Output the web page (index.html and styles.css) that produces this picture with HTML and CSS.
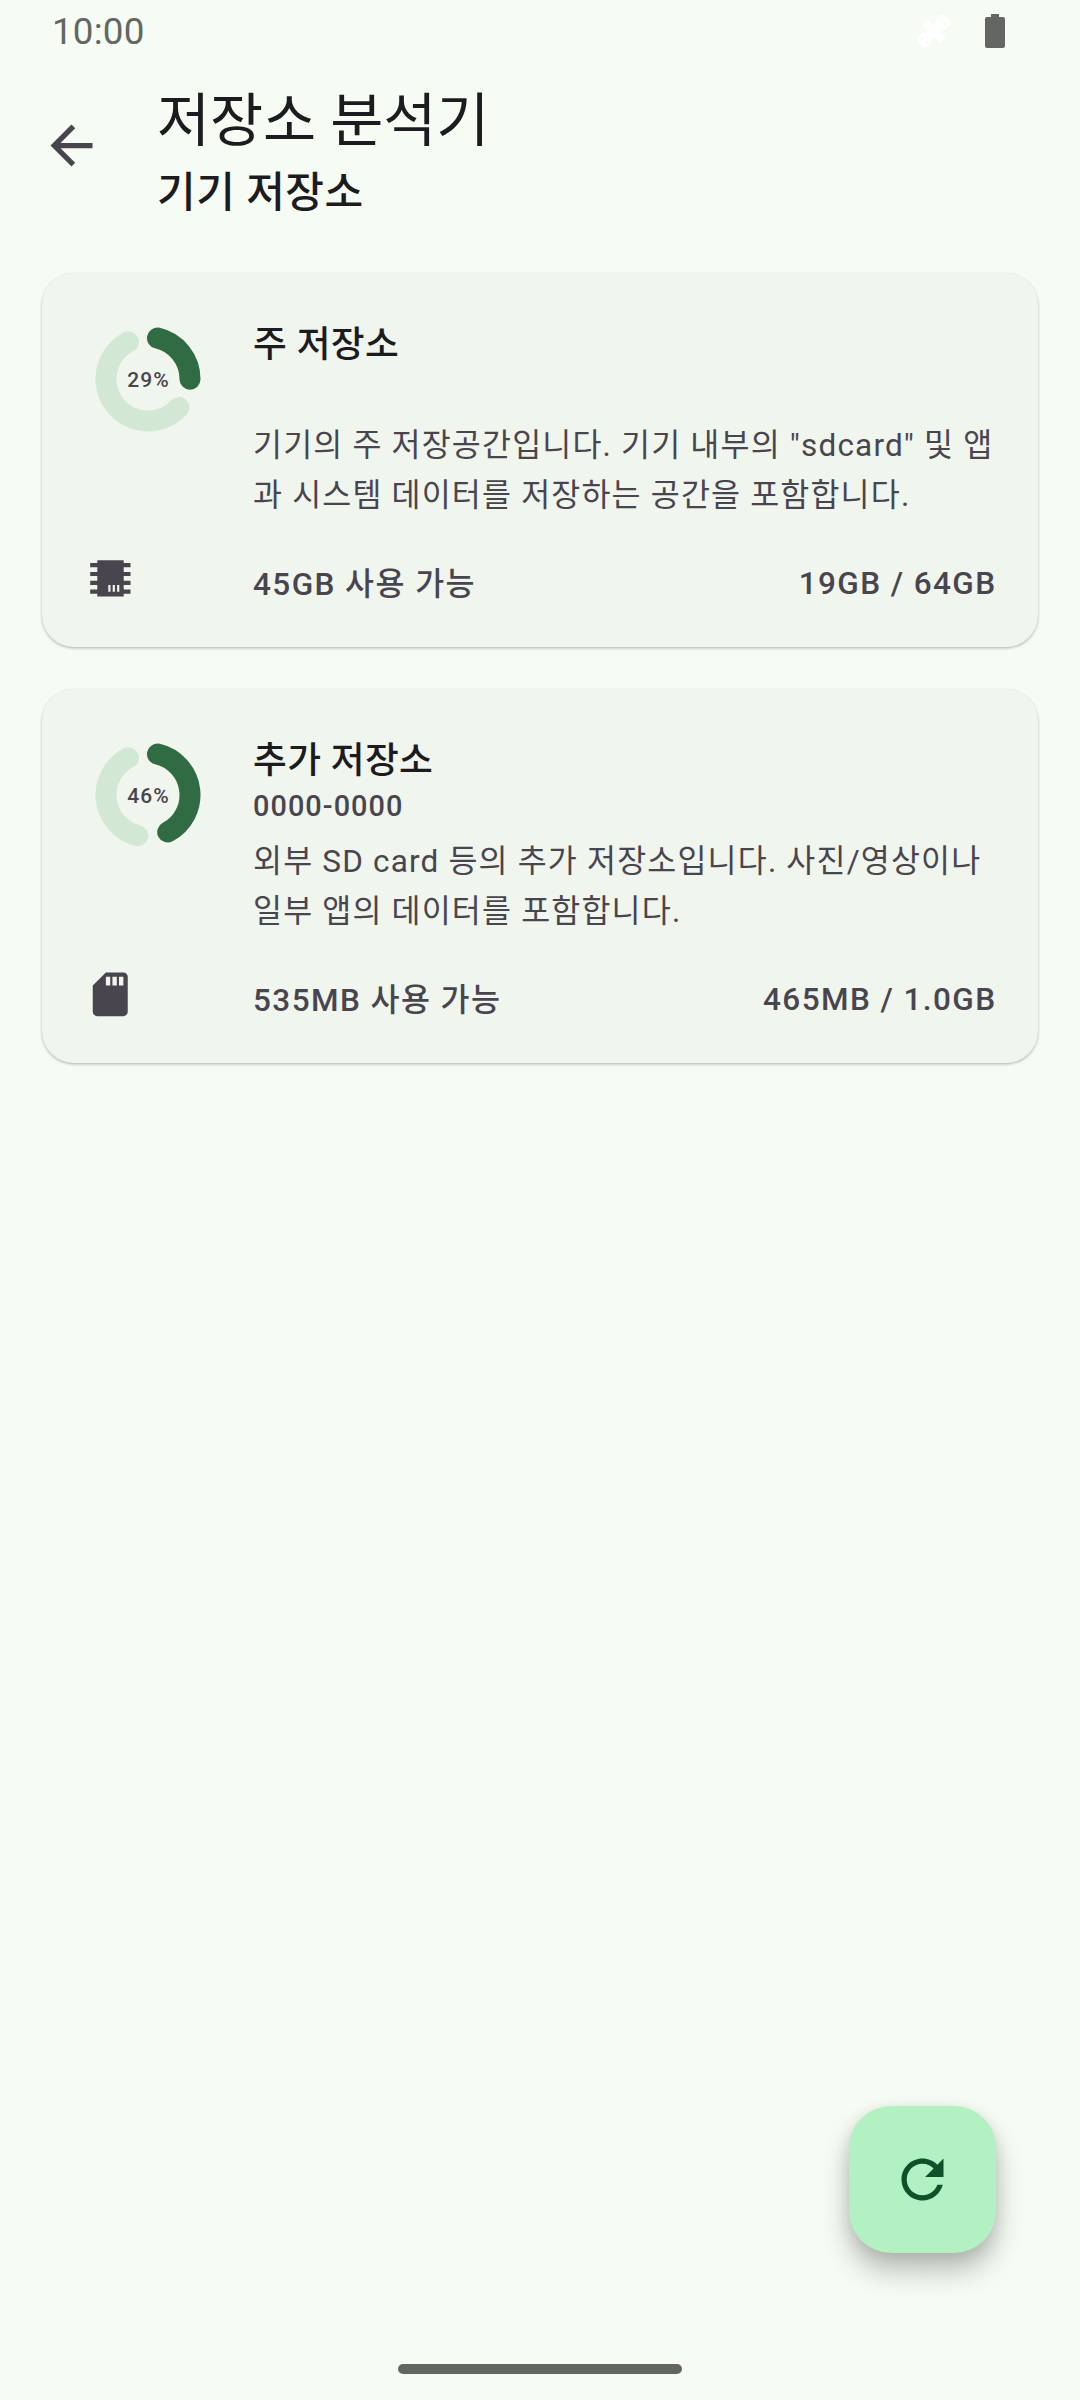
FILE: index.html
```html
<!DOCTYPE html>
<html lang="ko">
<head>
<meta charset="utf-8">
<title>저장소 분석기</title>
<link rel="stylesheet" href="styles.css">
</head>
<body>
<div class="screen">
  <div class="status">
    <span class="clock">10:00</span>
    <svg class="bug" width="38" height="38" viewBox="0 0 38 38"><path transform="translate(19 19) rotate(-45)" fill="#fff" fill-rule="evenodd" d="M-4-13h8v8h3.500Q9-7.500 13-7.500q6 0 6 6v3q0 6-6 6Q9 7.500 7.500 5H4v8h-8V5h-3.500Q-9 7.500-13 7.500q-6 0-6-6v-3q0-6 6-6Q-9-7.500-7.500-5H-4zM-14.500-4v2.500h2.500V-4zM-14.500 1.500V4h2.500V1.500zM12-4v2.500h2.500V-4zM12 1.500V4h2.500V1.500z"/></svg>
    <svg class="battery" width="20" height="34" viewBox="0 0 20 34"><path fill="#636662" d="M6 0h8v3h4a2 2 0 0 1 2 2v27a2 2 0 0 1-2 2H2a2 2 0 0 1-2-2V5a2 2 0 0 1 2-2h4z"/></svg>
  </div>
  <header class="appbar">
    <svg class="back" width="63" height="63" viewBox="0 0 24 24"><path fill="#49454f" d="M20 11H7.83l5.59-5.59L12 4l-8 8 8 8 1.41-1.41L7.83 13H20z"/></svg>
    <div>
      <h1 class="title">저장소 분석기</h1>
      <p class="subtitle">기기 저장소</p>
    </div>
  </header>
  <main class="cards">
    <article class="card">
      <div class="donut">
        <svg width="106" height="106" viewBox="-53 -53 106 106"><path class="track" d="M30.97 28.37A42 42 0 1 1-19.46-37.22"/><path class="used" d="M9.45-40.92A42 42 0 0 1 42 0.2"/></svg>
        <span class="percent">29%</span>
      </div>
      <div class="info">
        <h2 class="name">주 저장소</h2>
        <p class="id"></p>
        <p class="desc">기기의 주 저장공간입니다. 기기 내부의 "sdcard" 및 앱과 시스템 데이터를 저장하는 공간을 포함합니다.</p>
      </div>
      <svg class="kind" width="52.5" height="52.5" viewBox="0 0 52.5 52.5"><path fill="#49454f" fill-rule="evenodd" d="M13.300 8.300h26.400v2.700h6.800v4.300h-6.800v4.600h6.800v4.200h-6.800v4.600h6.800v4.200h-6.800v4.600h6.800v4.200h-6.800v2.800H13.300v-2.800H6.200v-4.200h7.100v-4.600H6.200v-4.200h7.100v-4.600H6.200v-4.200h7.100v-4.600H6.200V11h7.100zM24.300 33v6.700h2.200V33zM28.700 33v6.700h2.200V33zM33.100 33v6.700h2.200V33z"/></svg>
      <div class="stats"><span class="free">45GB 사용 가능</span><span class="total">19GB / 64GB</span></div>
    </article>
    <article class="card">
      <div class="donut">
        <svg width="106" height="106" viewBox="-53 -53 106 106"><path class="track" d="M-10.16 40.75A42 42 0 0 1-19.46-37.22"/><path class="used" d="M9.45-40.92A42 42 0 0 1 19.72 37.08"/></svg>
        <span class="percent">46%</span>
      </div>
      <div class="info">
        <h2 class="name">추가 저장소</h2>
        <p class="id">0000-0000</p>
        <p class="desc">외부 SD card 등의 추가 저장소입니다. 사진/영상이나 일부 앱의 데이터를 포함합니다.</p>
      </div>
      <svg class="kind" width="52.5" height="52.5" viewBox="0 0 24 24"><path fill="#49454f" d="M18,8H16V4H18M15,8H13V4H15M12,8H10V4H12M18,2H10L4,8V20A2,2 0 0,0 6,22H18A2,2 0 0,0 20,20V4A2,2 0 0,0 18,2Z"/></svg>
      <div class="stats"><span class="free">535MB 사용 가능</span><span class="total">465MB / 1.0GB</span></div>
    </article>
  </main>
  <div class="bottom">
    <button class="fab" aria-label="새로고침"><svg width="63" height="63" viewBox="0 0 24 24"><path fill="#10512b" d="M17.650 6.350C16.200 4.900 14.210 4 12 4c-4.420 0-7.990 3.580-7.990 8s3.570 8 7.990 8c3.730 0 6.840-2.550 7.730-6h-2.080c-.820 2.330-3.040 4-5.650 4-3.310 0-6-2.690-6-6s2.690-6 6-6c1.660 0 3.140.690 4.220 1.780L13 11h7V4z"/></svg></button>
    <div class="handle"></div>
  </div>
</div>
</body>
</html>
```

FILE: styles.css
```css
* { box-sizing: border-box; }
body { margin: 0; background: #f6fbf4; font-family: Roboto, "Noto Sans CJK KR", sans-serif; color: #49454f; }
h1, h2, p { margin: 0; font-weight: 400; }
svg { display: block; }
.screen { width: 1080px; height: 2400px; display: flex; flex-direction: column; }
.status { height: 63px; padding: 0 75px 1px 52px; display: flex; align-items: center; color: #636662; }
.clock { flex: 1; padding-top: 2px; font-size: 36.75px; line-height: 62px; letter-spacing: .2px; }
.bug { margin-right: 32px; }
.appbar { display: flex; align-items: flex-start; gap: 54.5px; height: 162px; padding: 19px 40px 0 39.5px; }
.back { margin-top: 32px; }
.title { font-size: 57.75px; line-height: 78px; letter-spacing: -.1px; color: #1c1b1f; }
.subtitle { font-size: 42px; line-height: 65px; font-weight: 500; letter-spacing: .5px; color: #1c1b1f; }
.cards { display: flex; flex-direction: column; gap: 42px; padding: 48px 42px 0; }
.card { height: 374px; padding: 42px 42px 0; border-radius: 32px; background: #f0f5ee; display: grid; grid-template-columns: 169px 1fr; grid-template-rows: 218px 60px; row-gap: 19px; box-shadow: 0 1px 3px rgba(0,0,0,.2), 0 2px 3px rgba(0,0,0,.08); }
.donut { display: grid; width: 106px; height: 106px; margin: 11px 0 0 10.5px; place-items: center; }
.donut > * { grid-area: 1 / 1; }
.donut path { fill: none; stroke-width: 21; stroke-linecap: round; }
.donut .track { stroke: #d2e8d4; }
.donut .used { stroke: #306b43; }
.percent { padding: 2px 0 0 2px; font-size: 21px; line-height: 28px; font-weight: 500; letter-spacing: 1.1px; }
.info { padding-top: 3px; }
.name { font-size: 36.75px; line-height: 54px; font-weight: 500; color: #1c1b1f; letter-spacing: .35px; }
.id { height: 38px; font-size: 28.875px; line-height: 36px; font-weight: 500; letter-spacing: 1.05px; }
.desc { padding-top: 11px; font-size: 31.5px; line-height: 50px; letter-spacing: 1.17px; word-break: break-all; }
.stats { display: flex; justify-content: space-between; padding-top: 3px; font-size: 31.5px; font-weight: 500; letter-spacing: 1.42px; line-height: 60px; }
.total { margin: -1px -.5px 0 0; }
.bottom { margin-top: auto; display: flex; flex-direction: column; }
.fab { align-self: flex-end; width: 147px; height: 147px; margin: 0 84px 111px 0; border: 0; padding: 0; border-radius: 42px; background: #b2f1c1; display: grid; place-items: center; box-shadow: 0 18px 28px rgba(0,0,0,.24), 0 4px 16px rgba(0,0,0,.1); }
.handle { align-self: center; width: 284px; height: 10px; border-radius: 5px; background: #636662; margin-bottom: 26px; }
```
